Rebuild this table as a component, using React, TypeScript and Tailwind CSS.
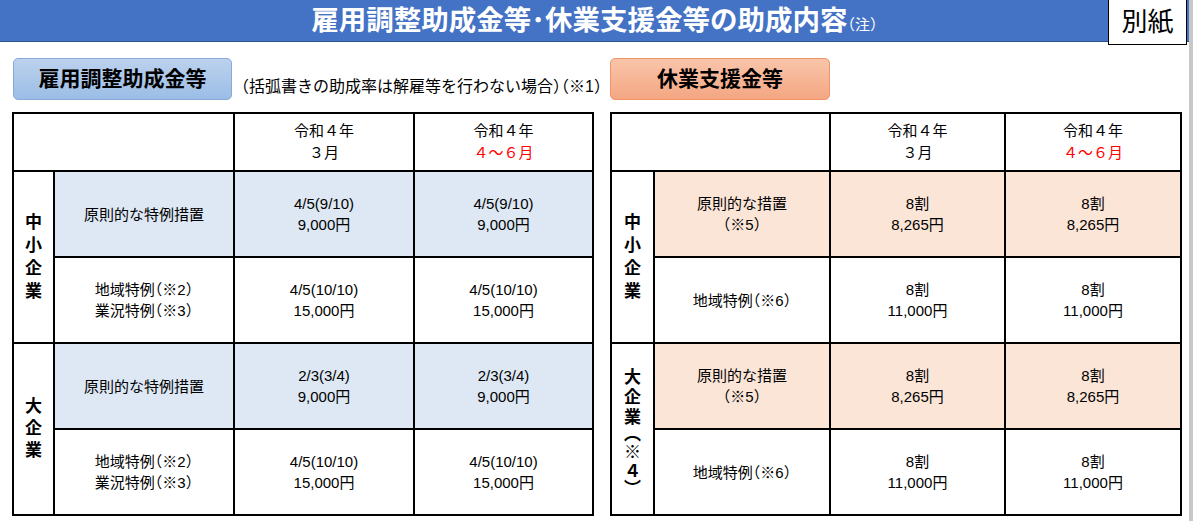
const font = { fontFamily: '"Liberation Sans", "Noto Sans CJK JP", sans-serif' }

type Row = {
  label: string[]
  march: string[]
  later: string[]
  shaded: boolean
}

type Group = {
  name: [string, string][]
  shift?: string
  rows: Row[]
}

const small: [string, string][] = [
  ["中", "leading-[23px]"],
  ["小", "leading-[23px]"],
  ["企", "leading-[23px]"],
  ["業", "leading-[23px]"],
]

const big: [string, string][] = [
  ["大", "leading-[22px]"],
  ["企", "leading-[22px]"],
  ["業", "leading-[22px]"],
]

const bigNote: [string, string][] = [
  ["大", "leading-[20px]"],
  ["企", "leading-[20px]"],
  ["業", "leading-[19px]"],
  ["︵", "leading-[16px]"],
  ["※", "leading-[20px]"],
  ["４", "leading-[17px]"],
  ["︶", "leading-[17px]"],
]

const koyouGroups: Group[] = [
  {
    name: small,
    rows: [
      { label: ["原則的な特例措置"], march: ["4/5(9/10)", "9,000円"], later: ["4/5(9/10)", "9,000円"], shaded: true },
      { label: ["地域特例（※2）", "業況特例（※3）"], march: ["4/5(10/10)", "15,000円"], later: ["4/5(10/10)", "15,000円"], shaded: false },
    ],
  },
  {
    name: big,
    rows: [
      { label: ["原則的な特例措置"], march: ["2/3(3/4)", "9,000円"], later: ["2/3(3/4)", "9,000円"], shaded: true },
      { label: ["地域特例（※2）", "業況特例（※3）"], march: ["4/5(10/10)", "15,000円"], later: ["4/5(10/10)", "15,000円"], shaded: false },
    ],
  },
]

const kyugyoGroups: Group[] = [
  {
    name: small,
    rows: [
      { label: ["原則的な措置", "（※5）"], march: ["8割", "8,265円"], later: ["8割", "8,265円"], shaded: true },
      { label: ["地域特例（※6）"], march: ["8割", "11,000円"], later: ["8割", "11,000円"], shaded: false },
    ],
  },
  {
    name: bigNote,
    shift: "mt-[6px]",
    rows: [
      { label: ["原則的な措置", "（※5）"], march: ["8割", "8,265円"], later: ["8割", "8,265円"], shaded: true },
      { label: ["地域特例（※6）"], march: ["8割", "11,000円"], later: ["8割", "11,000円"], shaded: false },
    ],
  },
]

function Lines({ lines }: { lines: string[] }) {
  return (
    <>
      {lines.map((l, i) => (
        <div key={i}>{l}</div>
      ))}
    </>
  )
}

function GroupName({ chars, shift }: { chars: [string, string][]; shift?: string }) {
  return (
    <div className={`flex flex-col items-center text-[17px] font-bold ${shift ?? ""}`}>
      {chars.map(([c, lh], i) => (
        <span key={i} className={lh}>
          {c}
        </span>
      ))}
    </div>
  )
}

function RateTable({
  groups,
  widths,
  shade,
}: {
  groups: Group[]
  widths: number[]
  shade: string
}) {
  const cell = "border-2 border-black text-center align-middle"
  return (
    <table
      className="table-fixed border-collapse text-[15px] text-black [font-feature-settings:'halt']"
      style={font}
    >
      <colgroup>
        {widths.map((w, i) => (
          <col key={i} style={{ width: w }} />
        ))}
      </colgroup>
      <thead>
        <tr className="h-[58px]">
          <th colSpan={2} className={cell}></th>
          <th className={`${cell} font-normal leading-[22px]`}>
            <div>令和４年</div>
            <div>３月</div>
          </th>
          <th className={`${cell} font-normal leading-[22px]`}>
            <div>令和４年</div>
            <div className="text-[#ff0000]">４～６月</div>
          </th>
        </tr>
      </thead>
      <tbody>
        {groups.map((g, gi) =>
          g.rows.map((r, ri) => (
            <tr key={`${gi}-${ri}`} className="h-[86px] leading-[21px]">
              {ri === 0 && (
                <td rowSpan={2} className={cell}>
                  <GroupName chars={g.name} shift={g.shift} />
                </td>
              )}
              <td className={`${cell} ${r.shaded ? shade : "bg-white"}`}>
                <Lines lines={r.label} />
              </td>
              <td className={`${cell} ${r.shaded ? shade : "bg-white"}`}>
                <Lines lines={r.march} />
              </td>
              <td className={`${cell} ${r.shaded ? shade : "bg-white"}`}>
                <Lines lines={r.later} />
              </td>
            </tr>
          ))
        )}
      </tbody>
    </table>
  )
}

export default function App() {
  return (
    <div className="relative h-[521px] w-[1193px] overflow-hidden bg-white" style={font}>
      <div className="relative flex h-[42px] w-[1189px] items-center justify-center border-b border-[#2f528f] bg-[#4472c4]">
        <h1 className="text-[27.5px] font-bold leading-none text-white [font-feature-settings:'halt']">
          雇用調整助成金等･休業支援金等の助成内容
          <span className="text-[15px] font-normal">（注）</span>
        </h1>
        <div className="absolute right-[2px] top-[-1px] flex h-[46px] w-[79px] items-center justify-center border border-black bg-white text-[26px] text-black">
          別紙
        </div>
      </div>
      <div className="absolute right-0 top-0 h-full w-[4px] bg-[#c8c8c8]" />

      <div className="flex pl-[12px] pt-[16px]">
        <div className="flex w-[598px] flex-col">
          <div className="flex items-end">
            <div className="ml-[1px] flex h-[42px] w-[219px] items-center justify-center rounded-[5px] border border-[#86abd9] bg-gradient-to-b from-[#bcd2ed] to-[#9bbde6] text-[21px] font-bold text-black">
              雇用調整助成金等
            </div>
            <div className="mb-[1px] ml-[9px] whitespace-nowrap text-[16px] text-black [font-feature-settings:'halt']">
              （括弧書きの助成率は解雇等を行わない場合）（※1）
            </div>
          </div>
          <div className="mt-[12px]">
            <RateTable groups={koyouGroups} widths={[41, 180, 180, 179]} shade="bg-[#dde8f4]" />
          </div>
        </div>

        <div className="flex flex-col">
          <div className="flex items-end">
            <div className="flex h-[42px] w-[220px] items-center justify-center rounded-[5px] border border-[#ee9466] bg-gradient-to-b from-[#f9c5ab] to-[#f4a682] text-[21px] font-bold text-black">
              休業支援金等
            </div>
          </div>
          <div className="mt-[12px]">
            <RateTable groups={kyugyoGroups} widths={[43, 176, 175, 176]} shade="bg-[#fbe5d7]" />
          </div>
        </div>
      </div>
    </div>
  )
}
